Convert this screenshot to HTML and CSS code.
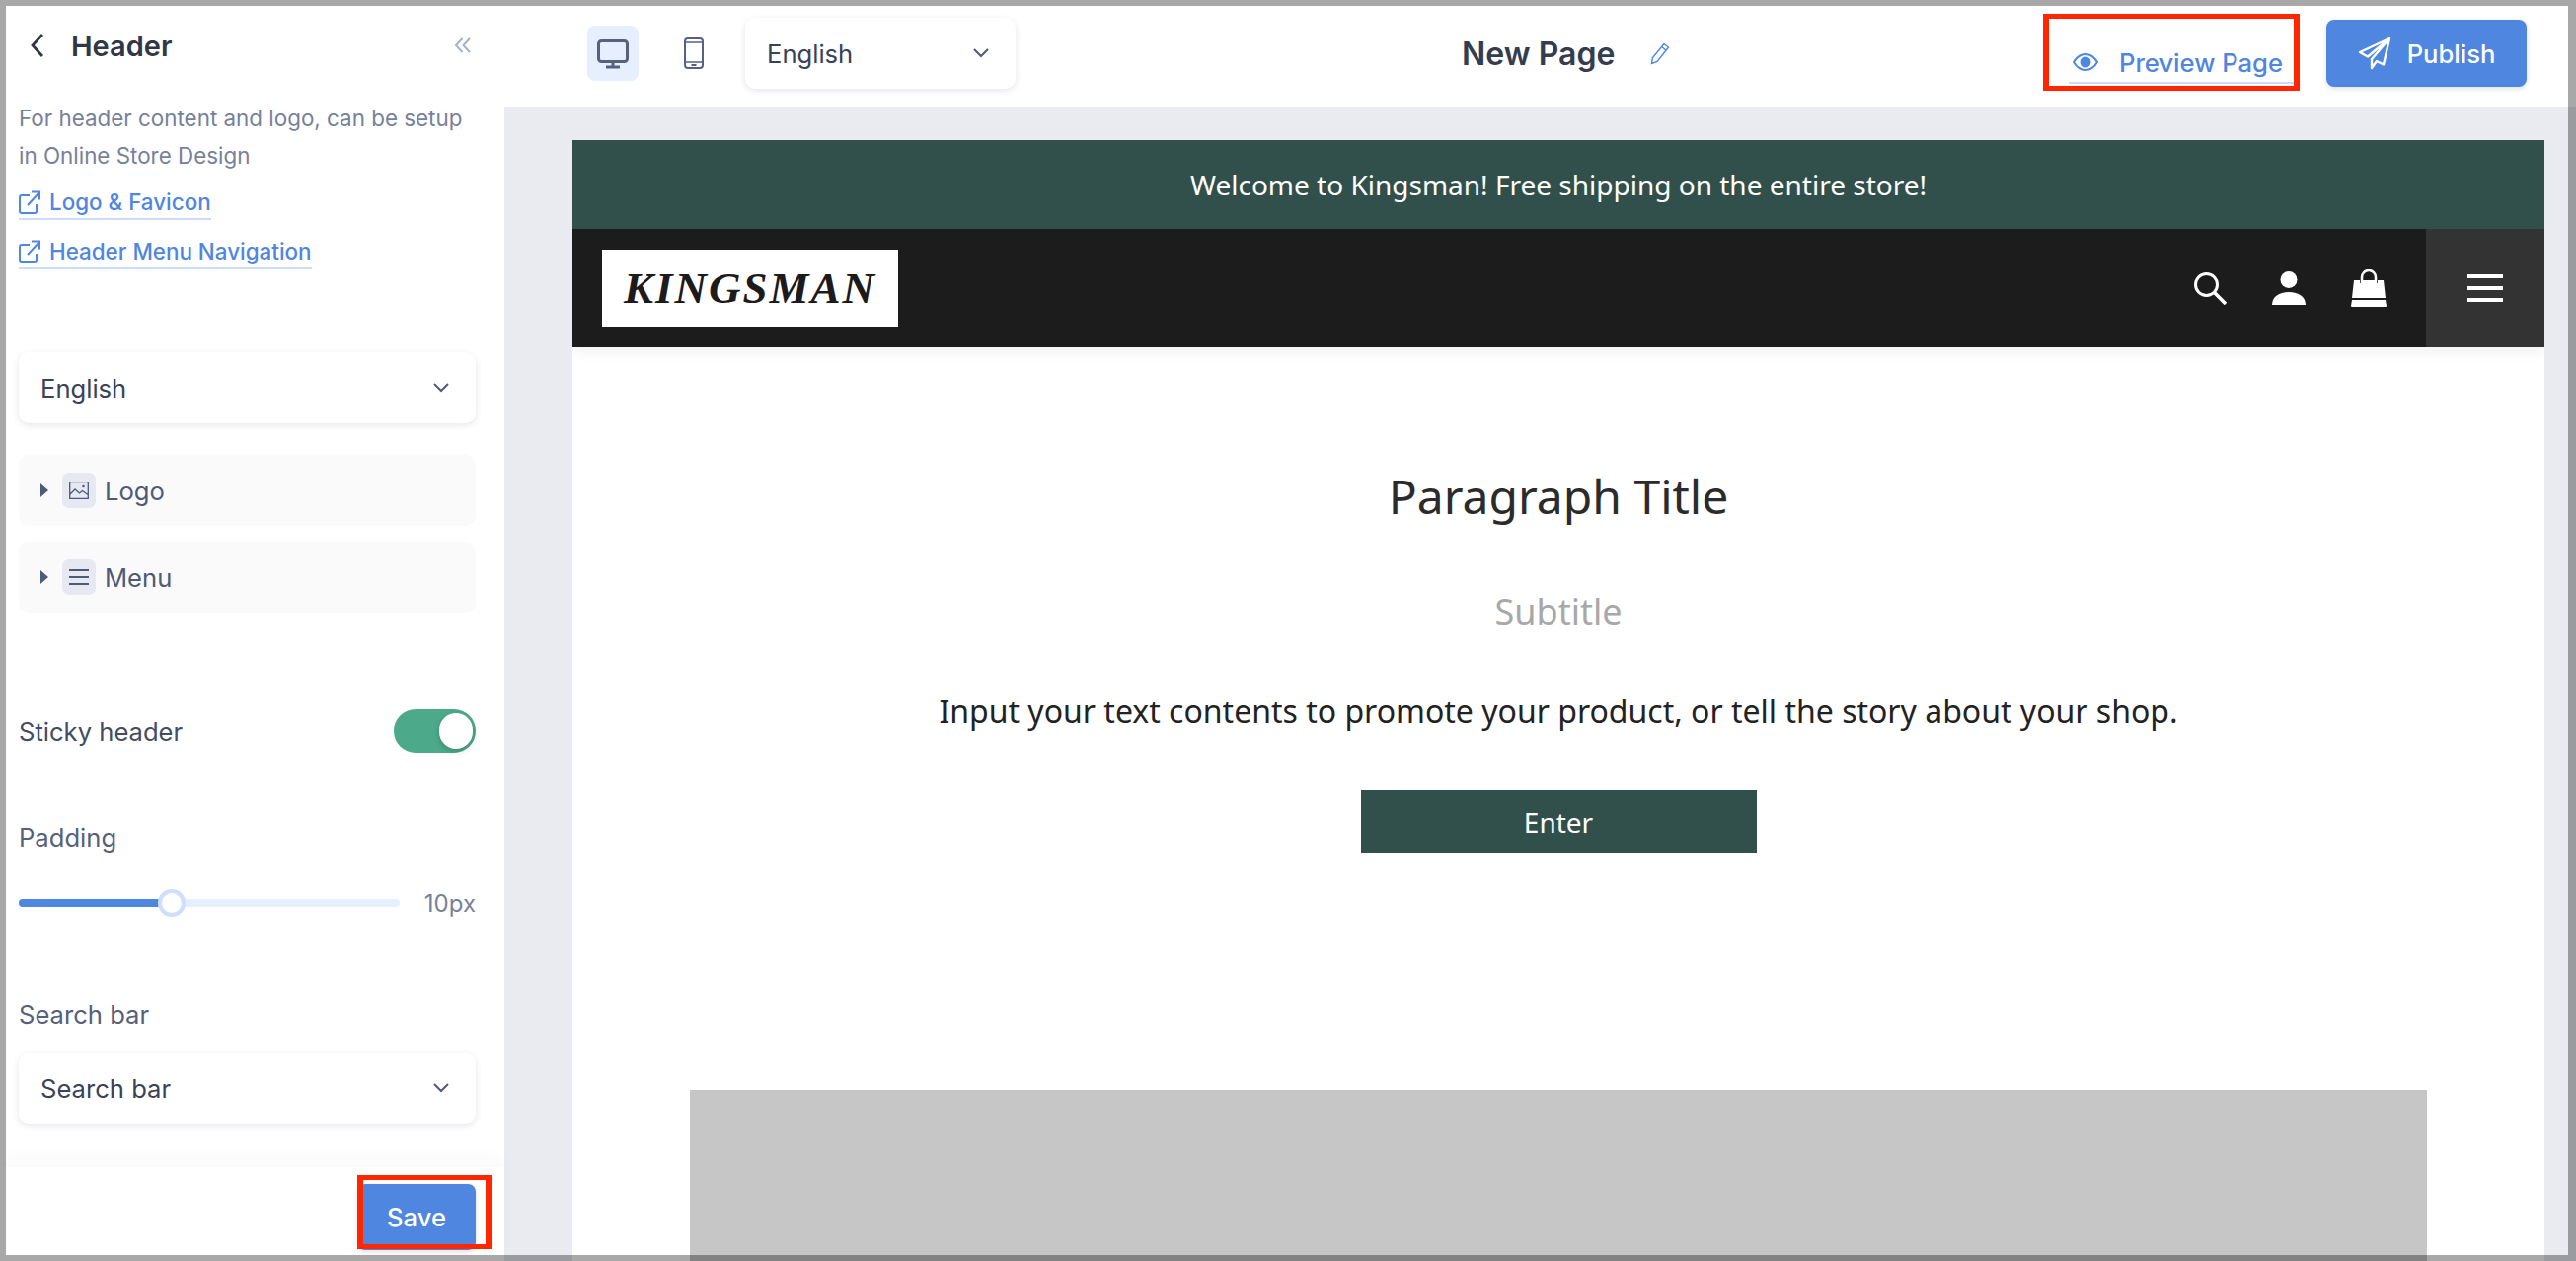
FILE: index.html
```html
<!DOCTYPE html>
<html lang="en">

<head>
    <meta charset="UTF-8">
    <title>Header</title>
    <link rel="stylesheet" href="styles.css">
</head>
<body>
    <div class="app">
        <!-- left settings panel -->
        <div class="side">
            <div class="sideScroll">
                <div class="sideHead">
                    <svg class="backIcon" width="16" height="26" viewBox="0 0 16 26"><path d="M13 2 3 13l10 11" fill="none" stroke="#2f3747" stroke-width="2.8"/></svg>
                    <h3>Header</h3>
                    <svg class="foldIcon" width="18" height="18" viewBox="0 0 18 18"><path d="M8.500 2 2 9l6.500 7M16 2 9.500 9l6.500 7" fill="none" stroke="#a9b1c9" stroke-width="2"/></svg>
                </div>
                <p class="desc">For header content and logo, can be setup<br>in Online Store Design</p>
                <a class="docLink first" href="javascript:;">
                    <svg width="22" height="24" viewBox="0 0 22 24"><path d="M11 5H3a2 2 0 0 0-2 2v14a2 2 0 0 0 2 2h13a2 2 0 0 0 2-2v-7M9 15 21 2M13 1.500h8v8" fill="none" stroke="#4f86e0" stroke-width="2"/></svg>
                    Logo &amp; Favicon
                </a>
                <a class="docLink" href="javascript:;">
                    <svg width="22" height="24" viewBox="0 0 22 24"><path d="M11 5H3a2 2 0 0 0-2 2v14a2 2 0 0 0 2 2h13a2 2 0 0 0 2-2v-7M9 15 21 2M13 1.500h8v8" fill="none" stroke="#4f86e0" stroke-width="2"/></svg>
                    Header Menu Navigation
                </a>

                <div class="select sideLang">
                    <span>English</span>
                    <svg width="16" height="10" viewBox="0 0 16 10"><path d="M1 1l7 7 7-7" fill="none" stroke="#4f5a78" stroke-width="2"/></svg>
                </div>

                <div class="fold foldLogo">
                    <i class="arrow"></i>
                    <span class="foldIco">
                        <svg width="20" height="18" viewBox="0 0 20 18"><path d="M.7.700h18.600v16.600H.7zM1 13l5-5 4.500 4 3-2.500 5.500 4" fill="none" stroke="#4f5a78" stroke-width="1.300"/><circle cx="14.500" cy="5" r="1.300" fill="#4f5a78"/></svg>
                    </span>
                    <span>Logo</span>
                </div>
                <div class="fold foldMenu">
                    <i class="arrow"></i>
                    <span class="foldIco">
                        <svg width="20" height="18" viewBox="0 0 20 18"><path d="M0 2h20M0 9h20M0 16h20" fill="none" stroke="#4f5a78" stroke-width="2"/></svg>
                    </span>
                    <span>Menu</span>
                </div>

                <div class="stickyRow">
                    <span>Sticky header</span>
                    <div class="toggle"><i></i></div>
                </div>

                <div class="label paddingLabel">Padding</div>
                <div class="sliderRow">
                    <div class="track">
                        <div class="trackFill"></div>
                        <i class="knob"></i>
                    </div>
                    <span class="sliderVal">10px</span>
                </div>

                <div class="label searchLabel">Search bar</div>
                <div class="select searchSelect">
                    <span>Search bar</span>
                    <svg width="16" height="10" viewBox="0 0 16 10"><path d="M1 1l7 7 7-7" fill="none" stroke="#4f5a78" stroke-width="2"/></svg>
                </div>
            </div>
            <div class="sideFoot">
                <a class="btn saveBtn" href="javascript:;">Save</a>
            </div>
        </div>

        <div class="main">
            <!-- top bar -->
            <div class="topBar">
                <div class="device active">
                    <svg width="32" height="30" viewBox="0 0 32 30"><rect x="1.500" y="1.500" width="29" height="21" rx="3" fill="none" stroke="#566180" stroke-width="3"/><path d="M16 23v5M9 28h14" fill="none" stroke="#566180" stroke-width="3"/></svg>
                </div>
                <div class="device">
                    <svg width="20" height="32" viewBox="0 0 20 32"><rect x="1" y="1" width="18" height="30" rx="3" fill="none" stroke="#566180" stroke-width="2"/><path d="M1 5h18M1 25h18" fill="none" stroke="#566180" stroke-width="1.500"/><path d="M7.500 28h5" stroke="#566180" stroke-width="2"/></svg>
                </div>
                <div class="select topLang">
                    <span>English</span>
                    <svg width="16" height="10" viewBox="0 0 16 10"><path d="M1 1l7 7 7-7" fill="none" stroke="#4f5a78" stroke-width="2"/></svg>
                </div>
                <div class="pageName">New Page</div>
                <svg class="pencil" width="22" height="24" viewBox="0 0 22 24"><path d="M15 2.500 19.500 6 8 20.500l-5.500 2 .8-5.700zM12.500 5.500 17 9" fill="none" stroke="#4f86e0" stroke-width="1.400"/></svg>
                <div class="topRight">
                    <a class="preview" href="javascript:;">
                        <svg width="26" height="20" viewBox="0 0 26 20"><path d="M1 10c3-5 7-8 12-8s9 3 12 8c-3 5-7 8-12 8S4 15 1 10z" fill="none" stroke="#4f86e0" stroke-width="2"/><circle cx="13" cy="10" r="5.500" fill="#4f86e0"/></svg>
                        Preview Page
                    </a>
                    <a class="btn publishBtn" href="javascript:;">
                        <svg width="34" height="34" viewBox="0 0 34 34"><path d="M32 2 2 16l8 4.500L32 2 14 23v9l5-7 7 3.500z" fill="none" stroke="#fff" stroke-width="2.400" stroke-linejoin="round"/></svg>
                        Publish
                    </a>
                </div>
            </div>

            <!-- store page preview -->
            <div class="stage">
                <div class="page">
                    <div class="banner">Welcome to Kingsman! Free shipping on the entire store!</div>
                    <div class="nav">
                        <div class="logo">KINGSMAN</div>
                        <div class="navIcons">
                            <svg width="34" height="34" viewBox="0 0 34 34"><circle cx="13.500" cy="13.500" r="11" fill="none" stroke="#fff" stroke-width="3"/><path d="M21 21l12 12" stroke="#fff" stroke-width="3.500"/></svg>
                            <svg width="34" height="34" viewBox="0 0 34 34"><circle cx="17" cy="8.500" r="8.500" fill="#fff"/><path d="M0 34c0-8 7-13 17-13s17 5 17 13z" fill="#fff"/></svg>
                            <svg width="36" height="38" viewBox="0 0 36 38"><path d="M11 14V8a7 7 0 0 1 14 0v6" fill="none" stroke="#fff" stroke-width="2.500"/><path d="M3 11h6v3h2v-3h14v3h2v-3h6l2 18H1zM1 31h34l1 6a1 1 0 0 1-1 1H1a1 1 0 0 1-1-1z" fill="#fff"/></svg>
                        </div>
                        <div class="navMenu"><i></i><i></i><i></i></div>
                    </div>
                    <div class="content">
                        <h2>Paragraph Title</h2>
                        <p class="subtitle">Subtitle</p>
                        <p class="story">Input your text contents to promote your product, or tell the story about your shop.</p>
                        <a class="enterBtn" href="javascript:;">Enter</a>
                        <div class="imageHolder"></div>
                    </div>
                </div>
            </div>
        </div>
    </div>

    <!-- annotations and screenshot edge, on top of everything -->
    <div class="mark markPreview"></div>
    <div class="mark markSave"></div>
    <div class="edge"></div>
</body>
</html>
```

FILE: styles.css
```css
* {
    margin: 0;
    padding: 0;
    box-sizing: border-box;
}
a {
    text-decoration: none;
}
i {
    display: block;
}
html,
body {
    height: 100%;
    overflow: hidden;
}
body {
    font-family: Inter, "Liberation Sans", sans-serif;
    color: #2f3747;
    background-color: #eaebf0;
}
.app {
    display: flex;
    height: 100%;
}

/* left panel */
.side {
    width: 511px;
    flex: none;
    display: flex;
    flex-direction: column;
    background-color: #fff;
}
.sideScroll {
    flex: 1;
    min-height: 0;
    overflow: hidden;
    padding: 0 29px 0 19px;
    display: flex;
    flex-direction: column;
}
.sideHead {
    height: 92px;
    flex: none;
    display: flex;
    align-items: center;
    padding-top: 0;
}
.backIcon {
    margin: 0 19px 0 11px;
}
.sideHead h3 {
    font-size: 29px;
    font-weight: 600;
    margin-left: 7px;
}
.foldIcon {
    margin-left: auto;
    margin-right: 4px;
}
.desc {
    margin-top: 9px;
    font-size: 22.400px;
    line-height: 38px;
    color: #77819a;
}
.docLink {
    display: flex;
    align-items: center;
    align-self: flex-start;
    gap: 9px;
    margin-top: 12px;
    padding-top: 4px;
    line-height: 32px;
    font-size: 22.400px;
    font-weight: 500;
    color: #4f86e0;
    border-bottom: 2px solid #c9dcfb;
}
.docLink.first {
    margin-top: 8px;
}
.select {
    height: 72px;
    flex: none;
    display: flex;
    align-items: center;
    justify-content: space-between;
    padding: 0 27px 0 22px;
    font-size: 25.600px;
    color: #394256;
    background-color: #fff;
    border-radius: 10px;
    box-shadow: 0 2px 6px rgba(40, 50, 80, .12);
}
.sideLang {
    margin-top: 84px;
}
.fold {
    height: 72px;
    flex: none;
    display: flex;
    align-items: center;
    padding-left: 22px;
    font-size: 25.600px;
    color: #4f5a78;
    background-color: #fafafb;
    border-radius: 10px;
}
.foldLogo {
    margin-top: 32px;
}
.foldMenu {
    margin-top: 16px;
}
.arrow {
    width: 0;
    height: 0;
    border-left: 8px solid #4f5a78;
    border-top: 7px solid transparent;
    border-bottom: 7px solid transparent;
}
.foldIco {
    width: 34px;
    height: 36px;
    margin: 0 9px 0 14px;
    display: flex;
    align-items: center;
    justify-content: center;
    background-color: #e6e9f2;
    border-radius: 7px;
}
.stickyRow {
    margin-top: 98px;
    height: 44px;
    flex: none;
    display: flex;
    align-items: center;
    justify-content: space-between;
    font-size: 25.600px;
    color: #434c62;
}
.toggle {
    width: 83px;
    height: 44px;
    padding: 4px 3px;
    display: flex;
    justify-content: flex-end;
    background-color: #4caa8b;
    border-radius: 22px;
}
.toggle i {
    width: 34px;
    height: 36px;
    border-radius: 18px;
    background-color: #fff;
    box-shadow: 0 2px 6px rgba(0, 0, 0, .2);
}
.label {
    height: 36px;
    line-height: 36px;
    flex: none;
    font-size: 25.600px;
    color: #55607c;
}
.paddingLabel {
    margin-top: 68px;
}
.searchLabel {
    margin-top: 78px;
}
.searchSelect {
    margin-top: 20px;
}
.sliderRow {
    margin-top: 30px;
    height: 36px;
    flex: none;
    display: flex;
    align-items: center;
    justify-content: space-between;
}
.track {
    position: relative;
    width: 386px;
    height: 8px;
    background-color: #e5effe;
    border-radius: 4px;
}
.trackFill {
    width: 146px;
    height: 8px;
    background-color: #4f86e0;
    border-radius: 4px 0 0 4px;
}
.knob {
    position: absolute;
    left: 141px;
    top: -10px;
    width: 28px;
    height: 28px;
    background-color: #fff;
    border: 4px solid #cddffc;
    border-radius: 50%;
}
.sliderVal {
    font-size: 24px;
    color: #77819a;
}
.sideFoot {
    height: 95px;
    flex: none;
    display: flex;
    justify-content: flex-end;
    align-items: flex-start;
    padding: 17px 29px 0 0;
    background-color: #fff;
    box-shadow: 0 -10px 16px rgba(40, 50, 80, .025);
}
.btn {
    display: flex;
    align-items: center;
    justify-content: center;
    color: #fff;
    background-color: #4f86e0;
    border-radius: 8px;
    font-size: 25.600px;
    font-weight: 500;
    box-shadow: 0 2px 5px rgba(40, 50, 80, .15);
}
.saveBtn {
    width: 120px;
    height: 67px;
}

/* top bar */
.main {
    flex: 1;
    min-width: 0;
    display: flex;
    flex-direction: column;
}
.topBar {
    height: 108px;
    flex: none;
    display: flex;
    align-items: center;
    padding: 0 50px 0 84px;
    background-color: #fff;
}
.device {
    width: 56px;
    height: 56px;
    display: flex;
    align-items: center;
    justify-content: center;
    border-radius: 8px;
    margin-right: 28px;
}
.device.active {
    width: 52px;
    background-color: #e5effe;
    margin-right: 28px;
    padding-top: 2px;
}
.topLang {
    width: 274px;
    margin-left: -4px;
}
.pageName {
    margin-left: 452px;
    font-size: 32px;
    font-weight: 600;
    color: #343c4f;
}
.pencil {
    margin-left: 35px;
}
.topRight {
    margin-left: auto;
    display: flex;
    align-items: center;
}
.preview {
    display: flex;
    align-items: center;
    gap: 21px;
    width: 229px;
    height: 42px;
    margin-top: 20px;
    margin-right: 32px;
    font-size: 25.600px;
    font-weight: 500;
    white-space: nowrap;
    color: #4f86e0;
    border-bottom: 2px solid #c9dcfb;
}
.preview svg {
    margin-left: 4px;
}
.publishBtn {
    width: 203px;
    height: 68px;
    gap: 16px;
}

/* store page */
.stage {
    flex: 1;
    min-height: 0;
    padding: 34px 32px 0 69px;
}
.page {
    height: 100%;
    overflow: hidden;
    background-color: #fff;
    font-family: "Noto Sans", sans-serif;
}
.banner {
    height: 90px;
    line-height: 90px;
    text-align: center;
    font-size: 28px;
    color: #fff;
    background-color: #32504b;
}
.nav {
    position: relative;
    height: 120px;
    display: flex;
    align-items: center;
    padding-left: 30px;
    background-color: #1c1c1c;
    box-shadow: 0 6px 12px rgba(0, 0, 0, .05);
}
.logo {
    width: 300px;
    height: 78px;
    line-height: 78px;
    text-align: center;
    font-family: "Liberation Serif", serif;
    font-style: italic;
    font-weight: bold;
    font-size: 45px;
    letter-spacing: 2px;
    color: #1c1a1a;
    background-color: #fff;
}
.navIcons {
    margin-left: auto;
    display: flex;
    align-items: center;
    gap: 46px;
    margin-right: 40px;
}
.navMenu {
    width: 120px;
    height: 120px;
    display: flex;
    flex-direction: column;
    align-items: center;
    justify-content: center;
    gap: 8px;
    background-color: #333;
}
.navMenu i {
    width: 36px;
    height: 4px;
    background-color: #fff;
}
.content {
    text-align: center;
}
.content h2 {
    margin-top: 119px;
    font-size: 48px;
    line-height: 64px;
    font-weight: 400;
    color: #2b2b2b;
}
.subtitle {
    margin-top: 60px;
    font-size: 36px;
    line-height: 50px;
    color: #a8a8a8;
}
.story {
    margin-top: 52px;
    font-size: 32px;
    line-height: 48px;
    color: #222;
}
.enterBtn {
    display: block;
    width: 401px;
    height: 64px;
    line-height: 64px;
    margin: 56px auto 0;
    font-size: 28px;
    color: #fff;
    background-color: #32504b;
}
.imageHolder {
    width: 1760px;
    height: 300px;
    margin: 240px auto 0;
    background-color: #c6c6c6;
}

/* annotations */
.mark {
    position: fixed;
    border: 5px solid #ff2600;
    border-left-width: 6px;
    border-right-width: 6px;
}
.markPreview {
    left: 2070px;
    top: 14px;
    width: 260px;
    height: 78px;
}
.markSave {
    left: 362px;
    top: 1191px;
    width: 136px;
    height: 75px;
}
.edge {
    position: fixed;
    left: 0;
    top: 0;
    right: 0;
    bottom: 0;
    border: solid rgba(0, 0, 0, .34);
    border-width: 6px 8px 6px 6px;
    pointer-events: none;
}
```
